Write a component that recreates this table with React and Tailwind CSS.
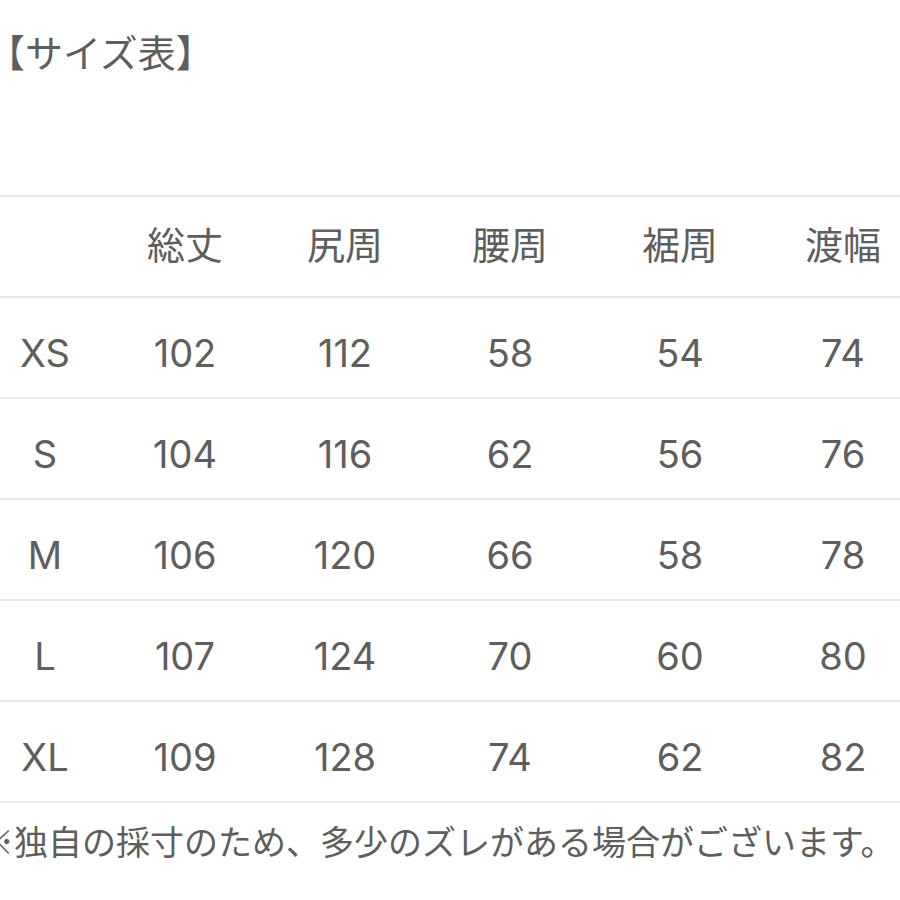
import React from 'react';

const header = ['', '総丈', '尻周', '腰周', '裾周', '渡幅'];

const rows = [
  ['XS', '102', '112', '58', '54', '74'],
  ['S', '104', '116', '62', '56', '76'],
  ['M', '106', '120', '66', '58', '78'],
  ['L', '107', '124', '70', '60', '80'],
  ['XL', '109', '128', '74', '62', '82'],
];

const jp = { fontFamily: '"Noto Sans CJK JP", "Noto Sans", sans-serif' };

function Row({ cells, head = false }) {
  return (
    <div className="grid h-[101px] grid-cols-[90px_190px_130px_200px_140px_186px] items-center border-t-2 border-[#e8e8e8]">
      {cells.map((c, i) => (
        <div key={i} className={head ? 'pb-[4px] text-center' : 'pt-[10px] text-center'}>
          {c}
        </div>
      ))}
    </div>
  );
}

export default function App() {
  return (
    <div
      className="h-[900px] w-[900px] overflow-hidden bg-white text-[#5e5e5e]"
      style={{ fontFamily: 'Inter, "Noto Sans CJK JP", sans-serif' }}
    >
      <div className="ml-[-13px] pt-[31px] text-[38px] leading-[40px]" style={jp}>
        【サイズ表】
      </div>

      <div className="mt-[124px] border-b-2 border-[#e8e8e8] text-[38px] leading-none">
        <Row cells={header} head />
        {rows.map((r) => (
          <Row key={r[0]} cells={r} />
        ))}
      </div>

      <div className="ml-[-20px] mt-[16px] whitespace-nowrap text-[34px] leading-[44px]" style={jp}>
        ※独自の採寸のため、多少のズレがある場合がございます。
      </div>
    </div>
  );
}
